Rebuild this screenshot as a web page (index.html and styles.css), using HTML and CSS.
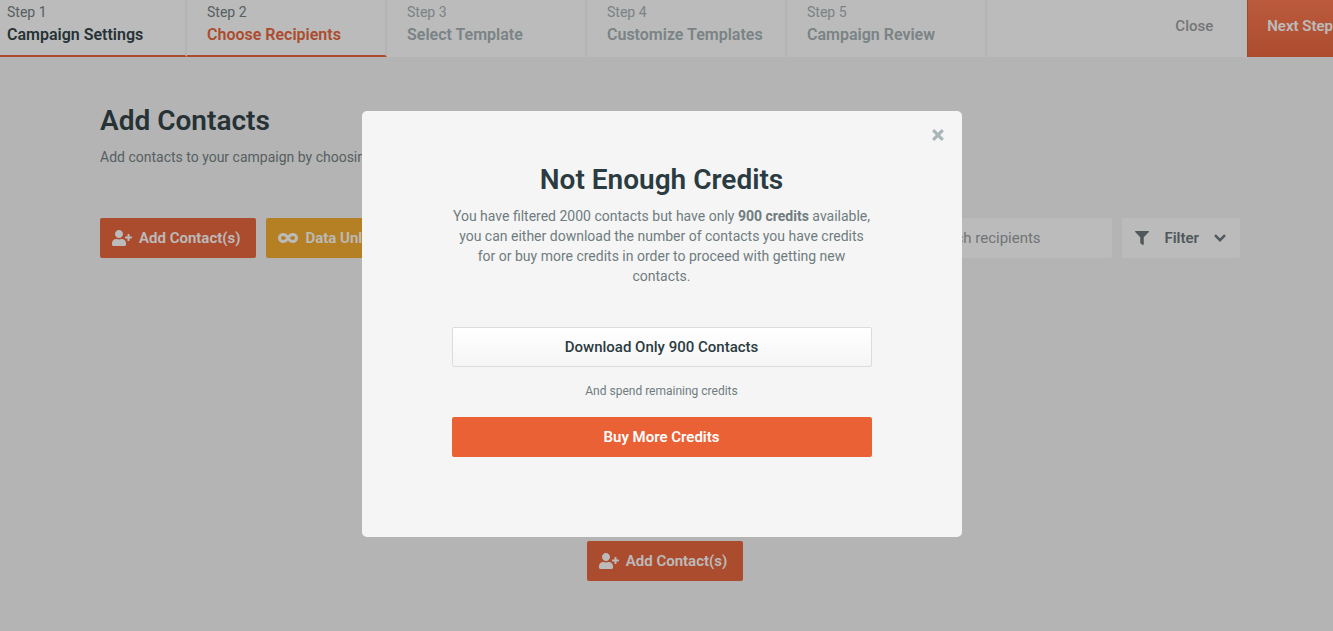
FILE: index.html
```html
<!DOCTYPE html>
<html lang="en">
<head>
    <meta charset="UTF-8">
    <meta name="viewport" content="width=device-width, initial-scale=1.0">
    <title>Choose Recipients</title>
    <link rel="stylesheet" href="styles.css">
</head>
<body>
    <!-- shared icons -->
    <svg class="sprite" width="0" height="0" aria-hidden="true">
        <symbol id="user-plus" viewBox="0 0 640 512">
            <path d="M624 208h-64v-64c0-8.800-7.200-16-16-16h-32c-8.800 0-16 7.200-16 16v64h-64c-8.800 0-16 7.200-16 16v32c0 8.800 7.200 16 16 16h64v64c0 8.800 7.200 16 16 16h32c8.800 0 16-7.200 16-16v-64h64c8.800 0 16-7.200 16-16v-32c0-8.800-7.200-16-16-16zm-400 48c70.700 0 128-57.300 128-128S294.700 0 224 0 96 57.300 96 128s57.300 128 128 128zm89.600 32h-16.700c-22.200 10.200-46.900 16-72.900 16s-50.600-5.800-72.900-16h-16.700C60.200 288 0 348.200 0 422.400V464c0 26.500 21.500 48 48 48h352c26.500 0 48-21.500 48-48v-41.600c0-74.200-60.200-134.400-134.400-134.400z"/>
        </symbol>
    </svg>

    <header class="topbar">
        <nav class="steps">
            <a href="#" class="step done"><span class="step-label">Step 1</span><span class="step-title">Campaign Settings</span></a>
            <a href="#" class="step active"><span class="step-label">Step 2</span><span class="step-title">Choose Recipients</span></a>
            <a href="#" class="step"><span class="step-label">Step 3</span><span class="step-title">Select Template</span></a>
            <a href="#" class="step"><span class="step-label">Step 4</span><span class="step-title">Customize Templates</span></a>
            <a href="#" class="step"><span class="step-label">Step 5</span><span class="step-title">Campaign Review</span></a>
        </nav>
        <div class="topbar-actions">
            <button class="close-link" type="button">Close</button>
            <button class="next-btn" type="button">Next Step</button>
        </div>
    </header>

    <main class="content">
        <h1>Add Contacts</h1>
        <p class="intro">Add contacts to your campaign by choosing from the options below.</p>

        <div class="toolbar">
            <button class="btn btn-orange" type="button">
                <svg class="icon" width="20" height="16"><use href="#user-plus"/></svg>
                Add Contact(s)
            </button>
            <button class="btn btn-yellow" type="button">
                <svg class="icon" width="20" height="16" viewBox="0 0 640 512"><path d="M471.100 96C405 96 353.300 137.300 320 174.600 286.700 137.300 235 96 168.900 96 75.800 96 0 167.800 0 256s75.800 160 168.900 160c66.100 0 117.800-41.300 151.100-78.600 33.300 37.300 85 78.600 151.100 78.600 93.100 0 168.900-71.800 168.900-160S564.200 96 471.100 96zM168.900 320c-40.200 0-72.900-28.700-72.900-64s32.700-64 72.900-64c38.200 0 73.400 36.100 94 64-20.400 27.600-55.900 64-94 64zm302.200 0c-38.200 0-73.400-36.100-94-64 20.400-27.600 55.900-64 94-64 40.200 0 72.900 28.700 72.900 64s-32.700 64-72.900 64z"/></svg>
                Data Unlimited
            </button>
            <input class="search" type="text" placeholder="Search recipients" aria-label="Search recipients">
            <button class="btn btn-filter" type="button">
                <svg class="icon" width="14" height="14" viewBox="0 0 512 512"><path d="M488 0H24C2.700 0-8 25.900 7 41l185 185v206c0 7.800 3.800 15.200 10.200 19.700l80 56C298 518.700 320 507.500 320 488V226L505 41C520 25.900 509.300 0 488 0z"/></svg>
                Filter
                <svg class="chevron" width="12" height="8" viewBox="0 0 12 8"><path d="M1 1.200l5 5 5-5"/></svg>
            </button>
        </div>

        <div class="empty">
            <button class="btn btn-orange" type="button">
                <svg class="icon" width="20" height="16"><use href="#user-plus"/></svg>
                Add Contact(s)
            </button>
        </div>
    </main>

    <div class="overlay">
        <div class="modal" role="dialog" aria-modal="true" aria-labelledby="modalTitle">
            <button class="modal-close" type="button" aria-label="Close dialog">
                <svg width="12" height="12" viewBox="0 0 12 12"><path d="M1.200 1.200l9.600 9.600M10.800 1.200l-9.600 9.600"/></svg>
            </button>
            <h2 id="modalTitle">Not Enough Credits</h2>
            <p class="modal-text">You have filtered 2000 contacts but have only <strong>900 credits</strong> available, you can either download the number of contacts you have credits for or buy more credits in order to proceed with getting new contacts.</p>
            <button class="modal-btn download" type="button">Download Only 900 Contacts</button>
            <p class="note">And spend remaining credits</p>
            <button class="modal-btn buy" type="button">Buy More Credits</button>
        </div>
    </div>
</body>
</html>
```
FILE: styles.css
```css
* {
    box-sizing: border-box;
}

body {
    margin: 0;
    min-height: 100vh;
    overflow: hidden;
    background: #f5f5f5;
    color: #6f7c7f;
    font-family: Roboto, "Liberation Sans", sans-serif;
    font-size: 14px;
    line-height: 20px;
}

h1, h2, p {
    margin: 0;
}

h1, h2 {
    color: #2a3b41;
    font-size: 28px;
    line-height: 38px;
    font-weight: 600;
}

button, input {
    font-family: inherit;
    font-size: 15px;
    border: none;
}

button {
    cursor: pointer;
}

.sprite {
    position: absolute;
}

/* top bar runs past both edges of the window */
.topbar {
    display: flex;
    justify-content: space-between;
    margin: 0 -20px 0 -13px;
    background: #fff;
}

.steps,
.topbar-actions {
    display: flex;
}

.step {
    width: 200px;
    padding: 2px 18px 7px 20px;
    border-right: 2px solid #f5f5f5;
    border-bottom: 2px solid #fff;
    color: #a2afb2;
    text-decoration: none;
    white-space: nowrap;
}

.step-label,
.step-title {
    display: block;
}

.step-title {
    font-size: 16px;
    line-height: 26px;
    font-weight: 600;
}

.done,
.active {
    border-bottom-color: #ea6135;
    color: #6f7c7f;
}

.done .step-title {
    color: #2a3b41;
}

.active .step-title {
    color: #ea6135;
}

.close-link {
    padding: 0 34px 5px;
    background: none;
    color: #9a9e9f;
    font-weight: 500;
}

.next-btn {
    padding: 0 20px 5px 19px;
    border-left: 1px solid #d95a30;
    background: linear-gradient(#ff754c, #ea6135);
    color: #fff;
    font-weight: 600;
    white-space: nowrap;
}

.content {
    padding: 45px 93px 50px 100px;
}

.intro {
    margin: 7px 0 51px;
}

.toolbar {
    display: flex;
    gap: 10px;
}

.btn {
    display: flex;
    align-items: center;
    gap: 7px;
    height: 40px;
    padding: 0 16px 0 12px;
    border-radius: 2px;
    color: #fff;
    font-weight: 600;
    white-space: nowrap;
}

.icon {
    fill: currentColor;
}

.btn-orange {
    background: #ea6135;
}

.btn-yellow {
    background: #f6a928;
}

.search {
    width: 237px;
    height: 40px;
    margin-left: auto;
    padding: 0 20px 0 50px;
    border-radius: 2px;
    background: #fff;
    color: #6f7c7f;
}

.search::placeholder {
    color: #959a9b;
    opacity: 1;
}

.btn-filter {
    gap: 15px;
    padding: 0 14px 0 13px;
    background: #fff;
    color: #657276;
}

.chevron {
    fill: none;
    stroke: currentColor;
    stroke-width: 2.4;
}

.empty {
    display: flex;
    justify-content: center;
    padding: 283px 10px 0 0;
}

.overlay {
    position: fixed;
    inset: 0;
    display: flex;
    justify-content: center;
    align-items: flex-start;
    padding: 111px 10px 0 0;
    background: rgba(30, 30, 30, 0.3);
}

.modal {
    position: relative;
    width: 600px;
    padding: 50px 90px 80px;
    border-radius: 5px;
    background: #f5f5f5;
    text-align: center;
}

.modal-close {
    position: absolute;
    top: 18px;
    right: 18px;
    display: flex;
    padding: 0;
    background: none;
}

.modal-close svg {
    stroke: #a9b5b8;
    stroke-width: 3.2;
}

.modal-text {
    margin: 7px 0 41px;
}

.modal-btn {
    display: block;
    width: 100%;
    height: 40px;
    border-radius: 2px;
}

.download {
    border: 1px solid #dcdcdc;
    background: linear-gradient(#fff, #f5f5f5);
    color: #2a3b41;
    font-weight: 500;
}

.note {
    margin: 14px 0 16px;
    font-size: 12px;
}

.buy {
    background: #ea6135;
    color: #fff;
    font-weight: 600;
}
```
